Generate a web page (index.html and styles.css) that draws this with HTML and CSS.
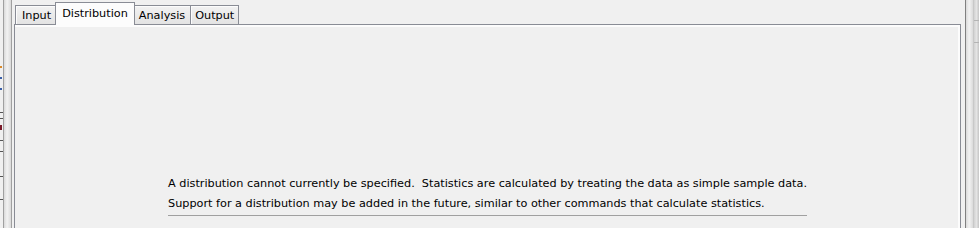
FILE: index.html
```html
<!DOCTYPE html>
<html lang="en">
<head>
    <meta charset="UTF-8">
    <title>Distribution</title>
    <link rel="stylesheet" href="styles.css">
</head>
<body>
    <div class="window">
        <div class="edge-left">
            <span class="mark orange" style="margin-top: 66px"></span>
            <span class="mark blue" style="margin-top: 9px"></span>
            <span class="mark blue" style="margin-top: 9px"></span>
            <span class="mark line" style="margin-top: 22px"></span>
            <span class="mark line" style="margin-top: 5px"></span>
            <span class="mark red" style="margin-top: 6px"></span>
            <span class="mark line" style="margin-top: 10px"></span>
            <span class="mark line" style="margin-top: 10px"></span>
            <span class="mark line" style="margin-top: 24px"></span>
            <span class="mark line" style="margin-top: 22px"></span>
        </div>
        <div class="splitter"></div>

        <div class="tab-pane">
            <div class="tab-strip">
                <div class="tab">Input</div>
                <div class="tab active">Distribution</div>
                <div class="tab">Analysis</div>
                <div class="tab">Output</div>
            </div>
            <div class="tab-panel">
                <div class="note">
                    <p>A distribution cannot currently be specified.  Statistics are calculated by treating the data as simple sample data.</p>
                    <p>Support for a distribution may be added in the future, similar to other commands that calculate statistics.</p>
                </div>
            </div>
        </div>

        <div class="splitter right"></div>
        <div class="edge-right">
            <div class="cell"></div>
            <div class="cell"></div>
        </div>
    </div>
</body>
</html>
```

FILE: styles.css
```css
:root {
    --bg: #f0f0f0;
    --tab-border: #898c95;
    --split-line: #a0a0a0;
}

* {
    margin: 0;
    padding: 0;
    box-sizing: border-box;
}

body {
    background: var(--bg);
    color: #000;
    font-family: Tahoma, 'DejaVu Sans', sans-serif;
    font-size: 11.25px;
    overflow: hidden;
}

.window {
    display: flex;
    width: 979px;
    height: 228px;
    overflow: hidden;
}

/* cut-off content on the left */
.edge-left {
    width: 3px;
    display: flex;
    flex-direction: column;
}

.mark {
    display: block;
    width: 2px;
    height: 2px;
}

.mark.orange { background: #d98a2b; }
.mark.blue { background: #3a5fa8; }
.mark.red { background: #7a1b2a; height: 5px; }
.mark.line { background: #555; width: 3px; height: 1px; }

.splitter {
    width: 9px;
    border-left: 1px solid var(--split-line);
    border-right: 1px solid var(--split-line);
    background: linear-gradient(to right, #dadada, #f2f2f2 45%, #dadada);
    margin-right: 2px;
}

.splitter.right {
    width: 8px;
    border-right: none;
    border-left-color: #808080;
    margin: 0 0 0 4px;
}

.edge-right {
    flex: 1;
    background: linear-gradient(to right, #d2d2d2, #e4e4e4 50%, #c4c4c4);
    border-left: 1px solid #c8c8c8;
}

.edge-right .cell {
    height: 19px;
    margin-top: 1px;
    border-top: 1px solid #b4b4b4;
}

.edge-right .cell:first-child {
    height: 21px;
    margin-top: 20px;
}

/* tabs */
.tab-pane {
    width: 947px;
    display: flex;
    flex-direction: column;
}

.tab-strip {
    height: 24px;
    display: flex;
    align-items: flex-end;
    padding-left: 1px;
    position: relative;
    z-index: 1;
}

.tab {
    height: 19px;
    padding: 3px 5px 0;
    border: 1px solid var(--tab-border);
    border-bottom: none;
    margin-right: -1px;
    background: linear-gradient(#f2f2f2, #e3e3e3);
    box-shadow: inset 1px 1px 0 #fcfcfc;
    white-space: nowrap;
}

.tab:first-child {
    padding: 3px 6px 0;
}

.tab.active {
    height: 23px;
    margin: 0 -2px -1px;
    padding: 4px 6px 0;
    background: #fcfcfc;
    box-shadow: none;
    position: relative;
    z-index: 2;
}

.tab:last-child {
    padding: 3px 4px 0;
}

.tab-panel {
    flex: 1;
    border: 1px solid var(--tab-border);
    border-bottom: none;
    box-shadow: inset 0 2px 0 #fcfcfc, inset -2px 0 0 #fcfcfc;
    background: var(--bg);
}

.note {
    width: fit-content;
    margin: 149px auto 0;
    padding-bottom: 1px;
    border-bottom: 1px solid #a0a0a0;
}

.note p {
    line-height: 20px;
    white-space: pre;
}
```
